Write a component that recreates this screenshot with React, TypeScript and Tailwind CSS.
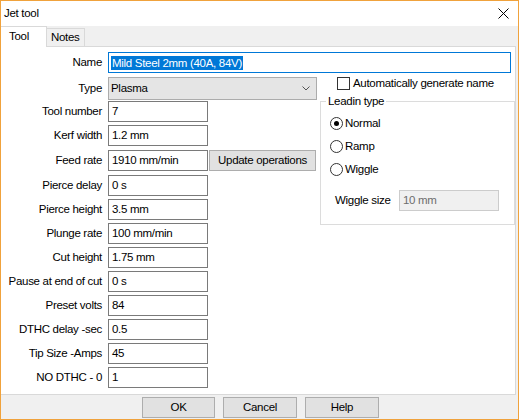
import React from 'react';

const rows: { label: string; value: string; gap: string }[] = [
  { label: 'Tool number', value: '7', gap: 'mt-[1px]' },
  { label: 'Kerf width', value: '1.2 mm', gap: 'mt-[3px]' },
  { label: 'Feed rate', value: '1910 mm/min', gap: 'mt-[4px]' },
  { label: 'Pierce delay', value: '0 s', gap: 'mt-[4px]' },
  { label: 'Pierce height', value: '3.5 mm', gap: 'mt-[3px]' },
  { label: 'Plunge rate', value: '100 mm/min', gap: 'mt-[3px]' },
  { label: 'Cut height', value: '1.75 mm', gap: 'mt-[3px]' },
  { label: 'Pause at end of cut', value: '0 s', gap: 'mt-[3px]' },
  { label: 'Preset volts', value: '84', gap: 'mt-[3px]' },
  { label: 'DTHC delay -sec', value: '0.5', gap: 'mt-[3px]' },
  { label: 'Tip Size -Amps', value: '45', gap: 'mt-[3px]' },
  { label: 'NO DTHC - 0', value: '1', gap: 'mt-[3px]' },
];

const IconClose = () => (
  <svg width="11" height="11" viewBox="0 0 11 11" fill="none" stroke="#000" strokeWidth="1">
    <path d="M0.5 0.5l10 10M10.5 0.5l-10 10" />
  </svg>
);

const IconChevron = () => (
  <svg width="8" height="5" viewBox="0 0 8 5" fill="none" stroke="#555" strokeWidth="1">
    <path d="M0.5 0.5l3.5 3.5 3.5-3.5" />
  </svg>
);

function Radio({ label, checked }: { label: string; checked?: boolean }) {
  return (
    <div className="flex items-center h-[15px]">
      <span className="w-[13px] h-[13px] rounded-full border border-[#333] flex items-center justify-center">
        {checked && <span className="w-[5px] h-[5px] rounded-full bg-[#000]" />}
      </span>
      <span className="ml-[2px]">{label}</span>
    </div>
  );
}

function Btn({ children, className = '' }: { children: React.ReactNode; className?: string }) {
  return (
    <div className={`h-[21px] bg-[#e1e1e1] border border-[#adadad] flex items-center justify-center ${className}`}>
      {children}
    </div>
  );
}

export default function App() {
  return (
    <div className="w-[519px] h-[420px] border border-[#f0a23c] bg-[#f0f0f0] flex flex-col text-[11.5px] tracking-[-0.3px] leading-none text-black font-['Liberation_Sans',Arial,sans-serif] overflow-hidden">
      {/* title bar */}
      <div className="h-[25px] bg-white flex items-center justify-between pl-[3px] pr-[9px]">
        <span>Jet tool</span>
        <IconClose />
      </div>

      {/* tabs */}
      <div className="h-[20px] flex items-end">
        <div className="relative z-10 -mb-px h-[21px] w-[46px] bg-white border-r border-t border-[#d9d9d9] flex items-center pl-[8px] pb-[1px]">
          Tool
        </div>
        <div className="h-[18px] px-[4px] bg-[#f0f0f0] border-r border-t border-[#d9d9d9] flex items-center">
          Notes
        </div>
      </div>

      {/* panel */}
      <div className="h-[349px] mr-[2px] bg-white border-t border-r border-b border-[#d9d9d9] pt-[5px]">
        <div className="flex items-center pr-[4px]">
          <div className="w-[101px] text-right">Name</div>
          <div className="ml-[6px] flex-1 h-[21px] border border-[#0078d7] flex items-center px-[2px]">
            <span className="bg-[#0078d7] text-white leading-[14px] px-[1px]">Mild Steel 2mm (40A, 84V)</span>
          </div>
        </div>

        <div className="flex mt-[4px]">
          <div className="w-[316px] flex flex-col">
            <div className="flex items-center">
              <div className="w-[101px] text-right">Type</div>
              <div className="ml-[6px] w-[209px] h-[23px] bg-[#e5e5e5] border border-[#acacac] flex items-center justify-between pl-[2px] pr-[6px]">
                <span>Plasma</span>
                <IconChevron />
              </div>
            </div>
            {rows.map((r) => (
              <div key={r.label} className={`flex items-center ${r.gap}`}>
                <div className="w-[101px] text-right whitespace-nowrap">{r.label}</div>
                <div className="ml-[6px] w-[100px] h-[21px] border border-[#7a7a7a] flex items-center px-[3px]">
                  {r.value}
                </div>
                {r.label === 'Feed rate' && <Btn className="ml-[1px] w-[107px]">Update operations</Btn>}
              </div>
            ))}
          </div>

          <div className="ml-[3px] w-[195px] flex flex-col">
            <div className="flex items-center h-[13px] pl-[17px]">
              <span className="w-[13px] h-[13px] border border-[#333]" />
              <span className="ml-[3px]">Automatically generate name</span>
            </div>
            <fieldset className="mt-[4px] border border-[#dcdcdc] pb-[13px]">
              <legend className="ml-[5px] px-[2px] leading-[14px]">Leadin type</legend>
              <div className="flex flex-col gap-[8px] pt-[8px] pl-[9px]">
                <Radio label="Normal" checked />
                <Radio label="Ramp" />
                <Radio label="Wiggle" />
              </div>
              <div className="flex items-center mt-[13px] pl-[14px]">
                <div className="w-[64px]">Wiggle size</div>
                <div className="w-[100px] h-[21px] bg-[#f0f0f0] border border-[#cccccc] flex items-center px-[3px] text-[#6d6d6d]">
                  10 mm
                </div>
              </div>
            </fieldset>
          </div>
        </div>
      </div>

      {/* buttons */}
      <div className="flex pt-[2px] pl-[141px] gap-[8px]">
        <Btn className="w-[73px]">OK</Btn>
        <Btn className="w-[74px]">Cancel</Btn>
        <Btn className="w-[74px]">Help</Btn>
      </div>
    </div>
  );
}
